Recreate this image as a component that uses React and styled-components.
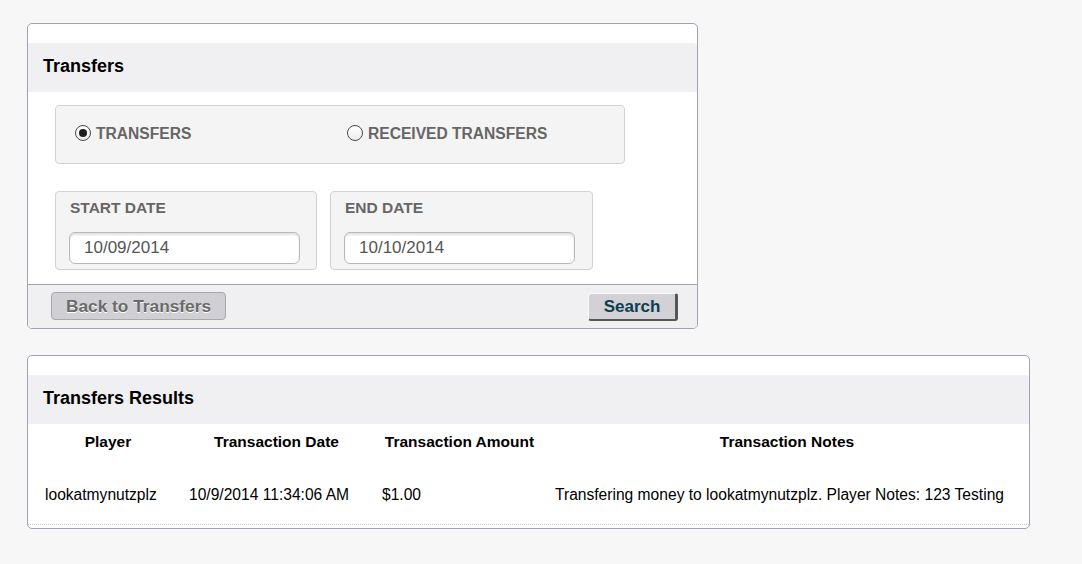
import React from "react";
import styled, { createGlobalStyle } from "styled-components";

const Global = createGlobalStyle`
  html, body { margin: 0; padding: 0; background: #f7f7f7; }
  body { font-family: "Liberation Sans", Arial, sans-serif; }
  * { box-sizing: border-box; }
`;

const Page = styled.div`
  padding: 23px 0 0 27px;
  display: flex;
  flex-direction: column;
  align-items: flex-start;
  gap: 26px;
`;

const Panel = styled.section`
  width: ${(p) => p.$width}px;
  background: #fff;
  border: 1px solid #9ea3b2;
  border-radius: 5px;
  padding-top: 19px;
  overflow: hidden;
`;

const PanelHeader = styled.div`
  height: 49px;
  background: #f0f0f2;
  display: flex;
  align-items: center;
  padding: 0 0 3px 15px;
  font-size: 18px;
  font-weight: bold;
  color: #000;
  border-top-right-radius: 4px;
`;

const PanelBody = styled.div`
  padding: 13px 0 14px 27px;
  display: flex;
  flex-direction: column;
  gap: 27px;
`;

const OptionBox = styled.div`
  width: 570px;
  height: 59px;
  background: #f4f4f4;
  border: 1px solid #d2d2d2;
  border-radius: 4px;
  display: grid;
  grid-template-columns: 272px auto;
  align-items: center;
  padding: 0 0 1px 19px;
`;

const Option = styled.label`
  display: flex;
  align-items: center;
  gap: 5px;
  font-size: 15.6px;
  font-weight: bold;
  color: #666;
  cursor: pointer;
`;

const RadioDot = styled.span`
  width: 16px;
  height: 16px;
  border-radius: 50%;
  border: 1px solid #4a4a4a;
  background: linear-gradient(#ffffff, #ececec);
  display: inline-flex;
  align-items: center;
  justify-content: center;
  margin-top: -3px;
  &::after {
    content: "";
    width: 8px;
    height: 8px;
    border-radius: 50%;
    background: ${(p) => (p.$checked ? "#1e1e1e" : "transparent")};
  }
`;

const DateRow = styled.div`
  display: flex;
  gap: 13px;
`;

const DateBox = styled.div`
  width: ${(p) => p.$width}px;
  height: 79px;
  background: #f4f4f4;
  border: 1px solid #d2d2d2;
  border-radius: 4px;
  padding: 7px 0 0 13px;
  display: flex;
  flex-direction: column;
`;

const DateLabel = styled.div`
  font-size: 15.5px;
  font-weight: bold;
  color: #666;
  line-height: 18px;
  padding-left: 1px;
`;

const DateInput = styled.input`
  margin-top: 15px;
  width: 231px;
  height: 32px;
  border: 1px solid #b9b9b9;
  border-radius: 6px;
  background: #fff;
  box-shadow: inset 0 2px 2px rgba(0, 0, 0, 0.12);
  font-family: "Liberation Sans", Arial, sans-serif;
  font-size: 17px;
  color: #555;
  padding: 0 0 0 14px;
  outline: none;
`;

const Footer = styled.div`
  height: 44px;
  background: #f0f0f2;
  border-top: 1px solid #9ea3b2;
  display: flex;
  align-items: flex-start;
  justify-content: space-between;
  padding: 7px 19px 0 23px;
`;

const BackButton = styled.button`
  width: 175px;
  height: 28px;
  background: #d0d0d4;
  border: 1px solid #a9a9ad;
  border-radius: 4px;
  font-family: "Liberation Sans", Arial, sans-serif;
  font-size: 17.3px;
  font-weight: bold;
  color: #6a6a6a;
  text-shadow: 0 1px 0 #fff;
  padding: 0;
`;

const SearchButton = styled.button`
  width: 90px;
  height: 28px;
  margin-top: 1px;
  background: #d2d2d6;
  border-style: solid;
  border-width: 1px 3px 2px 1px;
  border-color: #fafafa #555 #555 #fafafa;
  border-radius: 3px;
  font-family: "Liberation Sans", Arial, sans-serif;
  font-size: 17px;
  font-weight: bold;
  color: #0c3d50;
  padding: 0;
`;

const TableWrap = styled.div`
  padding: 0 1px 0 8px;
  border-bottom: 1px dotted #c8c8c8;
`;

const Table = styled.table`
  width: 992px;
  border-collapse: collapse;
  table-layout: fixed;
`;

const Th = styled.th`
  height: 35px;
  font-size: 15.5px;
  font-weight: bold;
  color: #000;
  text-align: center;
  padding: 0;
  vertical-align: middle;
`;

const Td = styled.td`
  font-size: 15.6px;
  color: #000;
  line-height: 18px;
  padding: 27px 0 20px 9px;
  text-align: left;
  white-space: nowrap;
`;

const BottomSpace = styled.div`
  height: 3px;
`;

const cols = [144, 193, 173, 482];

export default function App() {
  return (
    <>
      <Global />
      <Page>
        <Panel $width={671}>
          <PanelHeader>Transfers</PanelHeader>
          <PanelBody>
            <OptionBox>
              <Option>
                <RadioDot $checked />
                TRANSFERS
              </Option>
              <Option>
                <RadioDot />
                RECEIVED TRANSFERS
              </Option>
            </OptionBox>
            <DateRow>
              <DateBox $width={262}>
                <DateLabel>START DATE</DateLabel>
                <DateInput defaultValue="10/09/2014" />
              </DateBox>
              <DateBox $width={263}>
                <DateLabel>END DATE</DateLabel>
                <DateInput defaultValue="10/10/2014" />
              </DateBox>
            </DateRow>
          </PanelBody>
          <Footer>
            <BackButton>Back to Transfers</BackButton>
            <SearchButton>Search</SearchButton>
          </Footer>
        </Panel>

        <Panel $width={1003}>
          <PanelHeader>Transfers Results</PanelHeader>
          <TableWrap>
            <Table>
              <colgroup>
                {cols.map((w, i) => (
                  <col key={i} style={{ width: w }} />
                ))}
              </colgroup>
              <thead>
                <tr>
                  <Th>Player</Th>
                  <Th>Transaction Date</Th>
                  <Th>Transaction Amount</Th>
                  <Th>Transaction Notes</Th>
                </tr>
              </thead>
              <tbody>
                <tr>
                  <Td>lookatmynutzplz</Td>
                  <Td>10/9/2014 11:34:06 AM</Td>
                  <Td>$1.00</Td>
                  <Td>Transfering money to lookatmynutzplz. Player Notes: 123 Testing</Td>
                </tr>
              </tbody>
            </Table>
          </TableWrap>
          <BottomSpace />
        </Panel>
      </Page>
    </>
  );
}
